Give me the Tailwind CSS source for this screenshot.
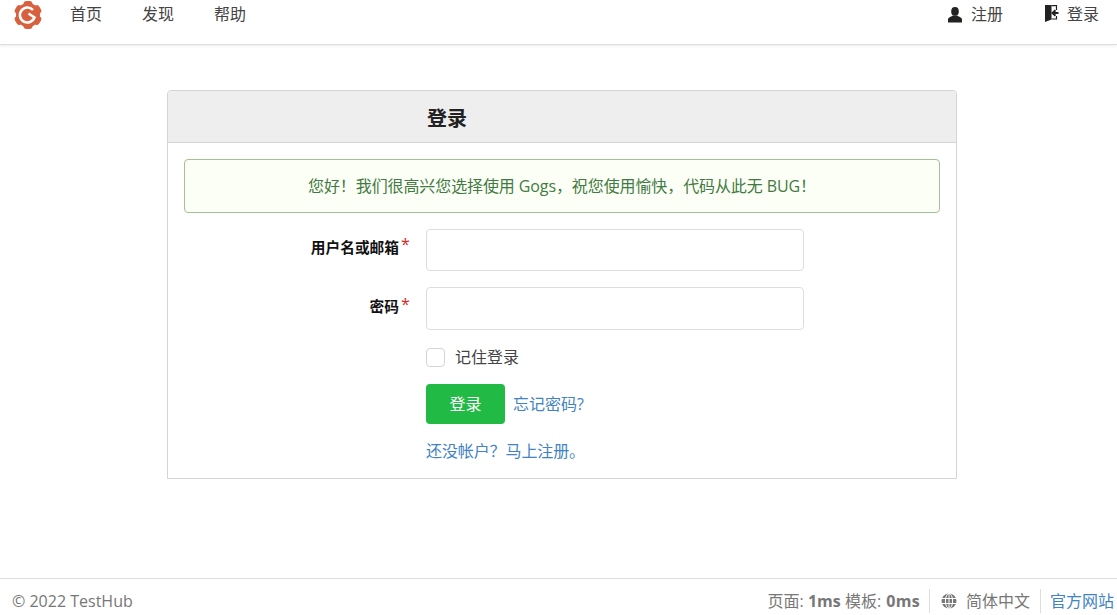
<!DOCTYPE html>
<html lang="zh-CN">
  <head>
    <meta charset="utf-8" />
    <title>登录 - TestHub</title>
    <script src="https://cdn.jsdelivr.net/npm/@tailwindcss/browser@4"></script>
  </head>
  <body class="bg-white font-['Open_Sans','Noto_Sans_CJK_SC',sans-serif] text-[#444] text-[14px]">
    <div class="flex flex-col h-[615px] w-[1117px] overflow-hidden">
      <!-- top nav -->
      <nav class="flex items-start h-[45px] shrink-0 border-b border-[#ddd] shadow-[0_1px_3px_rgba(0,0,0,0.08)] text-[16px] leading-[29px] text-[#444]">
        <svg class="ml-[12px] mt-[-1px] w-[32px] h-[32px]" viewBox="0 0 32 32">
          <g fill="#d9603e">
            <circle cx="16" cy="16" r="12" />
            <rect x="11.5" y="2" width="9" height="28" rx="3" />
            <rect x="11.5" y="2" width="9" height="28" rx="3" transform="rotate(60 16 16)" />
            <rect x="11.5" y="2" width="9" height="28" rx="3" transform="rotate(120 16 16)" />
          </g>
          <path d="M21 11A7.5 7.5 0 1 0 22.5 18.5L16.5 14.5" fill="none" stroke="#fff" stroke-width="2.6" />
        </svg>
        <a class="ml-[26px]">首页</a>
        <a class="ml-[40px]">发现</a>
        <a class="ml-[40px]">帮助</a>
        <a class="ml-auto flex items-center">
          <svg class="w-[14px] h-[16px] mr-[9px]" viewBox="0 0 14 16" fill="#222">
            <ellipse cx="7" cy="4.4" rx="3.8" ry="4.4" />
            <path d="M0 15.5V12.6C0 10.8 3 9.8 4.8 8.6L9.2 8.6C11 9.8 14 10.8 14 12.6V15.5Z" />
          </svg>
          注册
        </a>
        <a class="ml-[41px] mr-[18px] flex items-center">
          <svg class="w-[16px] h-[19px] mr-[7px] mt-[-3px]" viewBox="0 0 16 19">
            <path d="M1 1H7.5V15.6L1 18Z" fill="#222" />
            <path d="M7.5 1.6H12.5V6M12.5 12V15H7.5" fill="none" stroke="#222" stroke-width="1.2" />
            <path d="M8.5 9H14.5M11.5 6.2L8.5 9L11.5 11.8" fill="none" stroke="#222" stroke-width="2" />
          </svg>
          登录
        </a>
      </nav>

      <!-- login card -->
      <main class="flex-1 pt-[45px] pl-[167px]">
        <div class="w-[790px] h-[389px] border border-[#d4d4d5] rounded-t-[4px]">
          <h3 class="h-[52px] pl-[259px] bg-[#eee] border-b border-[#d4d4d5] rounded-t-[4px] text-[20px] leading-[55px] font-bold text-[#222]">登录</h3>
          <div class="px-[16px] pt-[16px]">
            <div class="h-[54px] flex items-center justify-center bg-[#fcfff5] border border-[#a3c293] rounded-[4px] text-[16px] tracking-[-0.1px] text-[#427a43]">
              您好！我们很高兴您选择使用 Gogs，祝您使用愉快，代码从此无 BUG！
            </div>

            <div class="flex items-center mt-[16px]">
              <label class="w-[215px] pb-[6px] text-right text-[14.7px] font-bold text-[#111]">用户名或邮箱</label>
              <span class="w-[27px] pl-[2px] mt-[-12px] text-[#db2828] text-[16px] leading-none">*</span>
              <input type="text" class="w-[378px] h-[42px] border border-[#ddd] rounded-[4px]" />
            </div>

            <div class="flex items-center mt-[16px]">
              <label class="w-[215px] pb-[4px] text-right text-[14.7px] font-bold text-[#111]">密码</label>
              <span class="w-[27px] pl-[2px] mt-[-10px] text-[#db2828] text-[16px] leading-none">*</span>
              <input type="password" class="w-[378px] h-[43px] border border-[#ddd] rounded-[4px]" />
            </div>

            <div class="flex items-center mt-[15px] ml-[242px] text-[16px]">
              <span class="w-[19px] h-[19px] border border-[#d4d4d5] rounded-[4px]"></span>
              <span class="ml-[10px]">记住登录</span>
            </div>

            <div class="flex items-center mt-[15px] ml-[242px] text-[16px]">
              <button class="w-[79px] h-[40px] bg-[#21ba45] text-white rounded-[4px]">登录</button>
              <a class="ml-[8px] text-[#4183c4]">忘记密码?</a>
            </div>

            <p class="mt-[16px] ml-[242px] text-[16px] leading-[22px] tracking-[-0.1px] text-[#4183c4]">还没帐户？马上注册。</p>
          </div>
        </div>
      </main>

      <!-- footer -->
      <footer class="flex items-center h-[37px] shrink-0 border-t border-[#ddd] pt-[9px] pb-[1px] text-[16px] text-[#777]">
        <span class="ml-[12px]">© 2022 TestHub</span>
        <span class="ml-auto">页面: <b>1ms</b> 模板: <b class="ml-[1px] tracking-[0.3px]">0ms</b></span>
        <span class="ml-[9px] h-[24px] border-l border-[#ddd]"></span>
        <span class="ml-[11px] flex items-center">
          <svg class="w-[16px] h-[16px] mr-[9px]" viewBox="0 0 16 16" fill="none" stroke="#777">
            <circle cx="8" cy="8" r="7.5" fill="#777" stroke="none" />
            <path d="M0.5 5.5H15.5M0.5 10.5H15.5M8 0.5V15.5" stroke="#fff" stroke-width="1" />
            <ellipse cx="8" cy="8" rx="3.6" ry="7.5" stroke="#fff" stroke-width="1" />
          </svg>
          简体中文
        </span>
        <span class="ml-[10px] h-[24px] border-l border-[#ddd]"></span>
        <a class="ml-[9px] mr-[3px] text-[#4183c4]">官方网站</a>
      </footer>
    </div>
  </body>
</html>
